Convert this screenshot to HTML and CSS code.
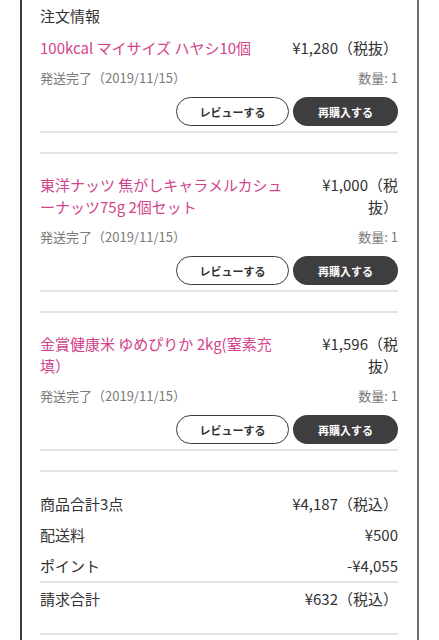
FILE: index.html
```html
<!DOCTYPE html>
<html lang="ja">
<head>
<meta charset="utf-8">
<title>注文情報</title>
<link rel="stylesheet" href="styles.css">
</head>
<body>
<div class="card">
  <h2 class="title">注文情報</h2>

  <div class="item first">
    <div class="head">
      <div class="name">100kcal マイサイズ ハヤシ10個</div>
      <div class="price">¥1,280（税抜）</div>
    </div>
    <div class="meta">
      <span>発送完了（2019/11/15）</span>
      <span>数量: 1</span>
    </div>
    <div class="actions">
      <button class="btn btn-outline">レビューする</button>
      <button class="btn btn-dark">再購入する</button>
    </div>
  </div>

  <div class="item">
    <div class="head">
      <div class="name">東洋ナッツ 焦がしキャラメルカシューナッツ75g 2個セット</div>
      <div class="price">¥1,000（税抜）</div>
    </div>
    <div class="meta">
      <span>発送完了（2019/11/15）</span>
      <span>数量: 1</span>
    </div>
    <div class="actions">
      <button class="btn btn-outline">レビューする</button>
      <button class="btn btn-dark">再購入する</button>
    </div>
  </div>

  <div class="item">
    <div class="head">
      <div class="name">金賞健康米 ゆめぴりか 2kg(窒素充填）</div>
      <div class="price">¥1,596（税抜）</div>
    </div>
    <div class="meta">
      <span>発送完了（2019/11/15）</span>
      <span>数量: 1</span>
    </div>
    <div class="actions">
      <button class="btn btn-outline">レビューする</button>
      <button class="btn btn-dark">再購入する</button>
    </div>
  </div>

  <div class="summary">
    <div class="row"><span>商品合計3点</span><span>¥4,187（税込）</span></div>
    <div class="row"><span>配送料</span><span>¥500</span></div>
    <div class="row"><span>ポイント</span><span>-¥4,055</span></div>
    <div class="row total"><span>請求合計</span><span>¥632（税込）</span></div>
  </div>
</div>
</body>
</html>
```

FILE: styles.css
```css
* { box-sizing: border-box; }

html, body {
  margin: 0;
  padding: 0;
  background: #ffffff;
}

body {
  font-family: "Noto Sans CJK JP", "Noto Sans", sans-serif;
  color: #333333;
  height: 640px;
  overflow: hidden;
}

.card {
  margin-left: 20px;
  width: 399px;
  min-height: 640px;
  border-left: 2px solid #3a3a3a;
  border-right: 2px solid #6f6f6f;
  padding: 5px 19px 0 18px;
}

.title {
  margin: 0;
  font-size: 15px;
  font-weight: 400;
  line-height: 22px;
  color: #333333;
}

.item {
  border-top: 2px solid #e4e4e4;
  border-bottom: 2px solid #e4e4e4;
  margin-top: 19px;
  padding: 20px 0 5px;
}

.item.first {
  border-top: none;
  margin-top: 0;
  padding-top: 10px;
}

.head {
  display: flex;
  gap: 32px;
  font-size: 15px;
  line-height: 22px;
}

.name {
  flex: 0 0 auto;
  max-width: 243px;
  color: #d2438c;
}

.price {
  flex: 0 1 auto;
  min-width: 0;
  margin-left: auto;
  text-align: right;
  color: #333333;
}

.meta {
  display: flex;
  justify-content: space-between;
  margin-top: 9px;
  font-size: 13px;
  line-height: 20px;
  color: #7a7a7a;
}

.actions {
  display: flex;
  justify-content: flex-end;
  gap: 4px;
  margin-top: 9px;
}

.btn {
  font-family: inherit;
  font-size: 11px;
  font-weight: 700;
  height: 29px;
  border-radius: 15px;
  padding: 0;
  cursor: pointer;
}

.btn-outline {
  width: 113px;
  background: #ffffff;
  border: 1px solid #3a3a3a;
  color: #333333;
}

.btn-dark {
  width: 105px;
  background: #3e3e40;
  border: none;
  color: #ffffff;
}

.summary {
  margin-top: 19px;
  border-top: 2px solid #e4e4e4;
  border-bottom: 2px solid #e4e4e4;
  padding: 16px 0 19px;
}

.row {
  display: flex;
  justify-content: space-between;
  font-size: 15px;
  line-height: 31px;
  color: #333333;
}

.row.total {
  border-top: 2px solid #e4e4e4;
}
```
